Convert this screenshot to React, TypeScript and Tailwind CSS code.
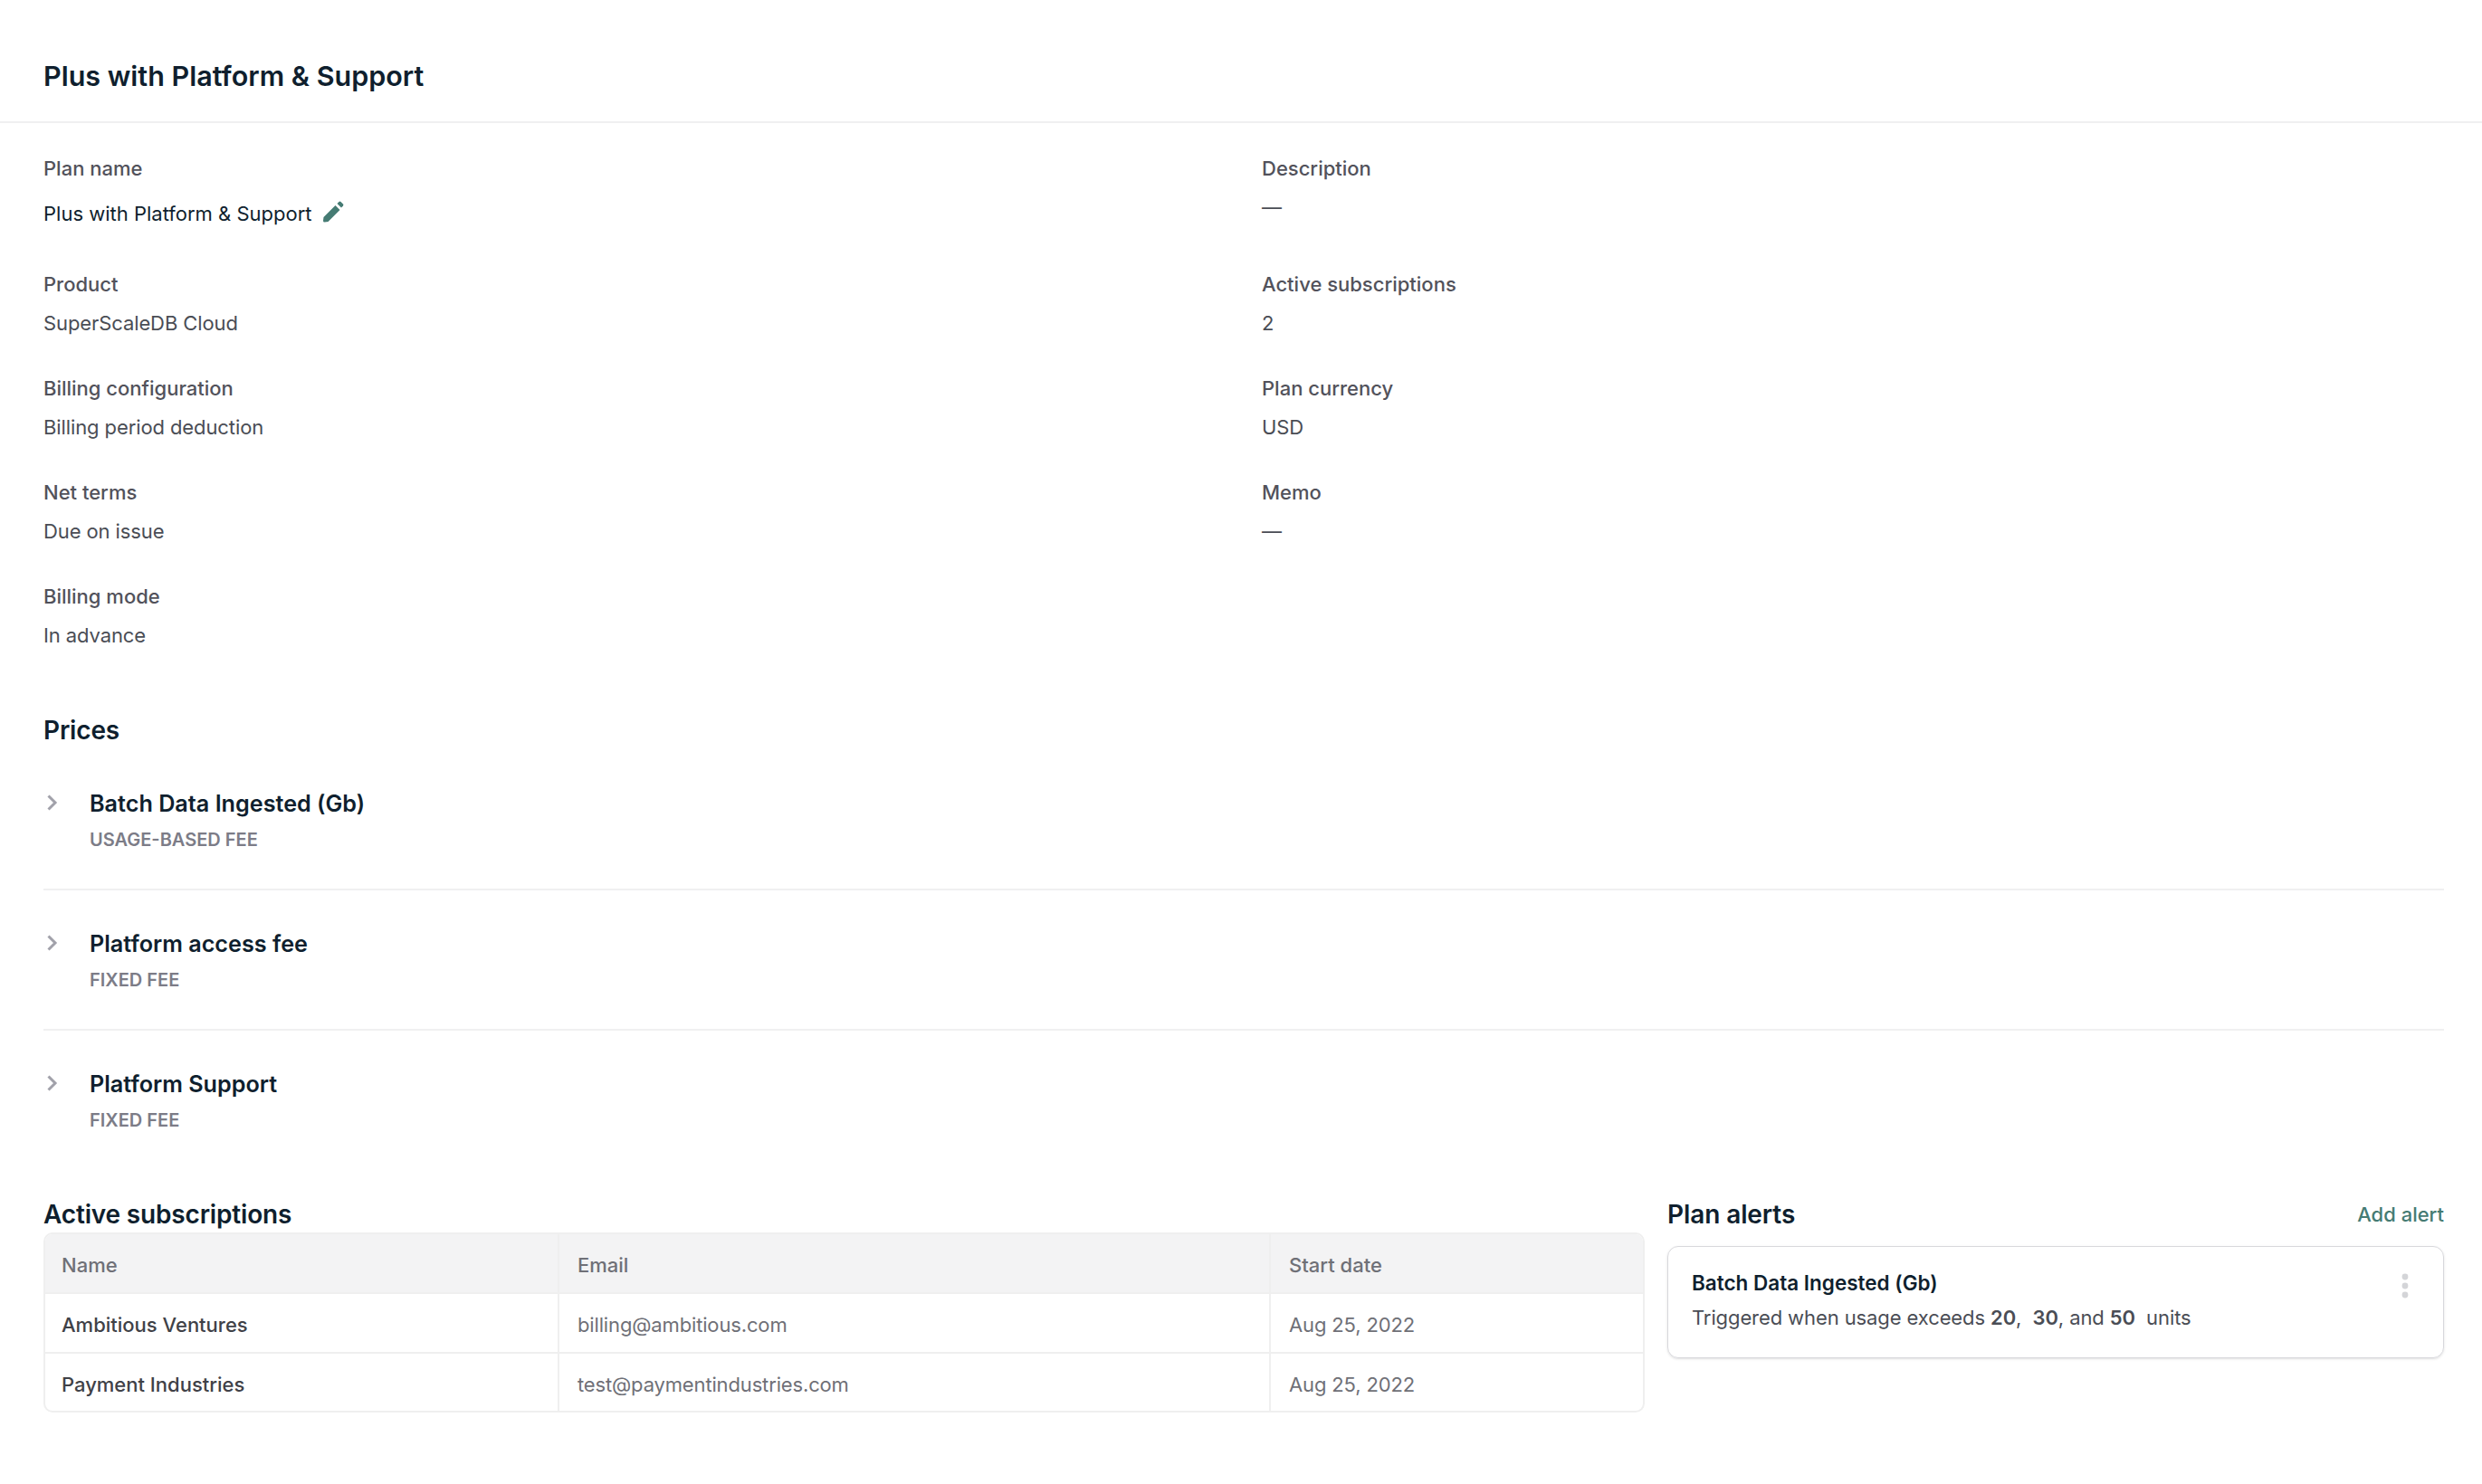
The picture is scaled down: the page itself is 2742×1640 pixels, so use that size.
const Field = ({ label, value }: { label: string; value: React.ReactNode }) => (
  <div className="h-[115px] pt-[3px]">
    <div className="text-[22px] leading-[34px] font-medium text-[#52525b]">{label}</div>
    <div className="mt-[9px] text-[22px] leading-[34px] tracking-[-0.1px] text-[#4a4d55]">{value}</div>
  </div>
)

const PriceRow = ({ name, kind, last }: { name: string; kind: string; last?: boolean }) => (
  <div className={`flex h-[155px] pt-[40px] ${last ? '' : 'border-b-2 border-[#f0f0f1]'}`}>
    <svg width="14" height="20" viewBox="0 0 14 20" fill="none" className="mt-[8px] ml-[2px] mr-[35px]">
      <path d="M3.5 2.5l7.5 7.5-7.5 7.5" stroke="#a1a1aa" strokeWidth="3" />
    </svg>
    <div>
      <div className="text-[25.2px] leading-[38px] font-semibold text-[#0f1f2e]">{name}</div>
      <div className="mt-[6px] text-[20px] leading-[30px] font-semibold text-[#7c7c87]">{kind}</div>
    </div>
  </div>
)

const cell = 'px-5 pt-[5px] flex items-center text-[22px] border-[#efefef]'

const rows = [
  ['Ambitious Ventures', 'billing@ambitious.com', 'Aug 25, 2022'],
  ['Payment Industries', 'test@paymentindustries.com', 'Aug 25, 2022'],
]

export default function App() {
  return (
    <div className="min-h-[1640px] bg-white font-['Inter',sans-serif]">
      <div className="h-[136px] border-b-2 border-[#f0f0f1] pl-[48px] pt-[61px]">
        <h1 className="text-[30.5px] leading-[46px] font-semibold text-[#0f1f2e]">Plus with Platform & Support</h1>
      </div>
      <div className="pl-[48px] pr-[42px] pt-[30px]">
        <div className="grid grid-cols-2 gap-x-[40px]">
          <div className="h-[128px] pt-[3px]">
            <div className="text-[22px] leading-[34px] font-medium text-[#52525b]">Plan name</div>
            <div className="mt-[16px] flex items-center gap-[11px] text-[22px] leading-[34px] text-[#0f1f2e]">
              Plus with Platform & Support
              <svg width="24" height="24" viewBox="0 0 24 24" fill="#457b73" className="mt-[-4px]">
                <path d="M1.5 18L14.5 5l5 5L6.5 23l-4 .5Q1 23.5 1 22z" />
                <path d="M16.5 3l2-2q1-.8 2 0l2.5 2.5q.8 1 0 2l-2 2z" />
              </svg>
            </div>
          </div>
          <Field label="Description" value="—" />
          <Field label="Product" value="SuperScaleDB Cloud" />
          <Field label="Active subscriptions" value="2" />
          <Field label="Billing configuration" value="Billing period deduction" />
          <Field label="Plan currency" value="USD" />
          <Field label="Net terms" value="Due on issue" />
          <Field label="Memo" value="—" />
          <Field label="Billing mode" value="In advance" />
        </div>

        <h2 className="mt-[33px] text-[28px] leading-[40px] tracking-[-0.17px] font-semibold text-[#0f1f2e]">Prices</h2>
        <div className="mt-[2px]">
          <PriceRow name="Batch Data Ingested (Gb)" kind="USAGE-BASED FEE" />
          <PriceRow name="Platform access fee" kind="FIXED FEE" />
          <PriceRow name="Platform Support" kind="FIXED FEE" last />
        </div>

        <div className="flex gap-[25px] mt-[28px]">
          <div className="w-[1769px]">
            <h2 className="text-[28px] leading-[40px] tracking-[-0.17px] font-semibold text-[#0f1f2e]">Active subscriptions</h2>
            <div className="border-2 border-[#efefef] rounded-[10px] overflow-hidden">
              <div className="grid grid-cols-[568px_786px_1fr] h-[64px] bg-[#f3f3f4]">
                {['Name', 'Email', 'Start date'].map((h, i) => (
                  <div key={h} className={`${cell} font-medium text-[#6f7077] ${i === 0 ? 'pl-[18px] border-r-2' : i === 1 ? 'border-r-2' : ''}`}>{h}</div>
                ))}
              </div>
              {rows.map((r, i) => (
                <div key={r[0]} className={`grid grid-cols-[568px_786px_1fr] border-t-2 border-[#efefef] ${i === 0 ? 'h-[66px]' : 'h-[65px]'}`}>
                  <div className={`${cell} pl-[18px] font-medium text-[#3f4147] border-r-2`}>{r[0]}</div>
                  <div className={`${cell} tracking-[-0.15px] text-[#6f7077] border-r-2`}>{r[1]}</div>
                  <div className={`${cell} tracking-[-0.15px] text-[#6f7077]`}>{r[2]}</div>
                </div>
              ))}
            </div>
          </div>
          <div className="flex-1">
            <div className="flex justify-between items-center">
              <h2 className="text-[28px] leading-[40px] tracking-[-0.1px] font-semibold text-[#0f1f2e]">Plan alerts</h2>
              <a className="text-[22px] font-medium text-[#457b73]">Add alert</a>
            </div>
            <div className="mt-[15px] h-[124px] border-[1.5px] border-[#d8d8dc] rounded-[12px] shadow-sm px-[26px] pt-[23px] flex justify-between">
              <div>
                <div className="text-[22.5px] leading-[34px] font-semibold text-[#0f1f2e]">Batch Data Ingested (Gb)</div>
                <div className="mt-[4px] text-[22px] leading-[34px] tracking-[-0.1px] text-[#4a4d55] whitespace-pre">
                  Triggered when usage exceeds <b className="font-semibold">20</b>,  <b className="font-semibold">30</b>, and <b className="font-semibold">50</b>  units
                </div>
              </div>
              <svg width="10" height="28" viewBox="0 0 10 28" fill="#d4d5d8" className="mt-[6px] mr-[11px]">
                <circle cx="5" cy="4" r="3.4" />
                <circle cx="5" cy="14" r="3.4" />
                <circle cx="5" cy="24" r="3.4" />
              </svg>
            </div>
          </div>
        </div>
      </div>
    </div>
  )
}
